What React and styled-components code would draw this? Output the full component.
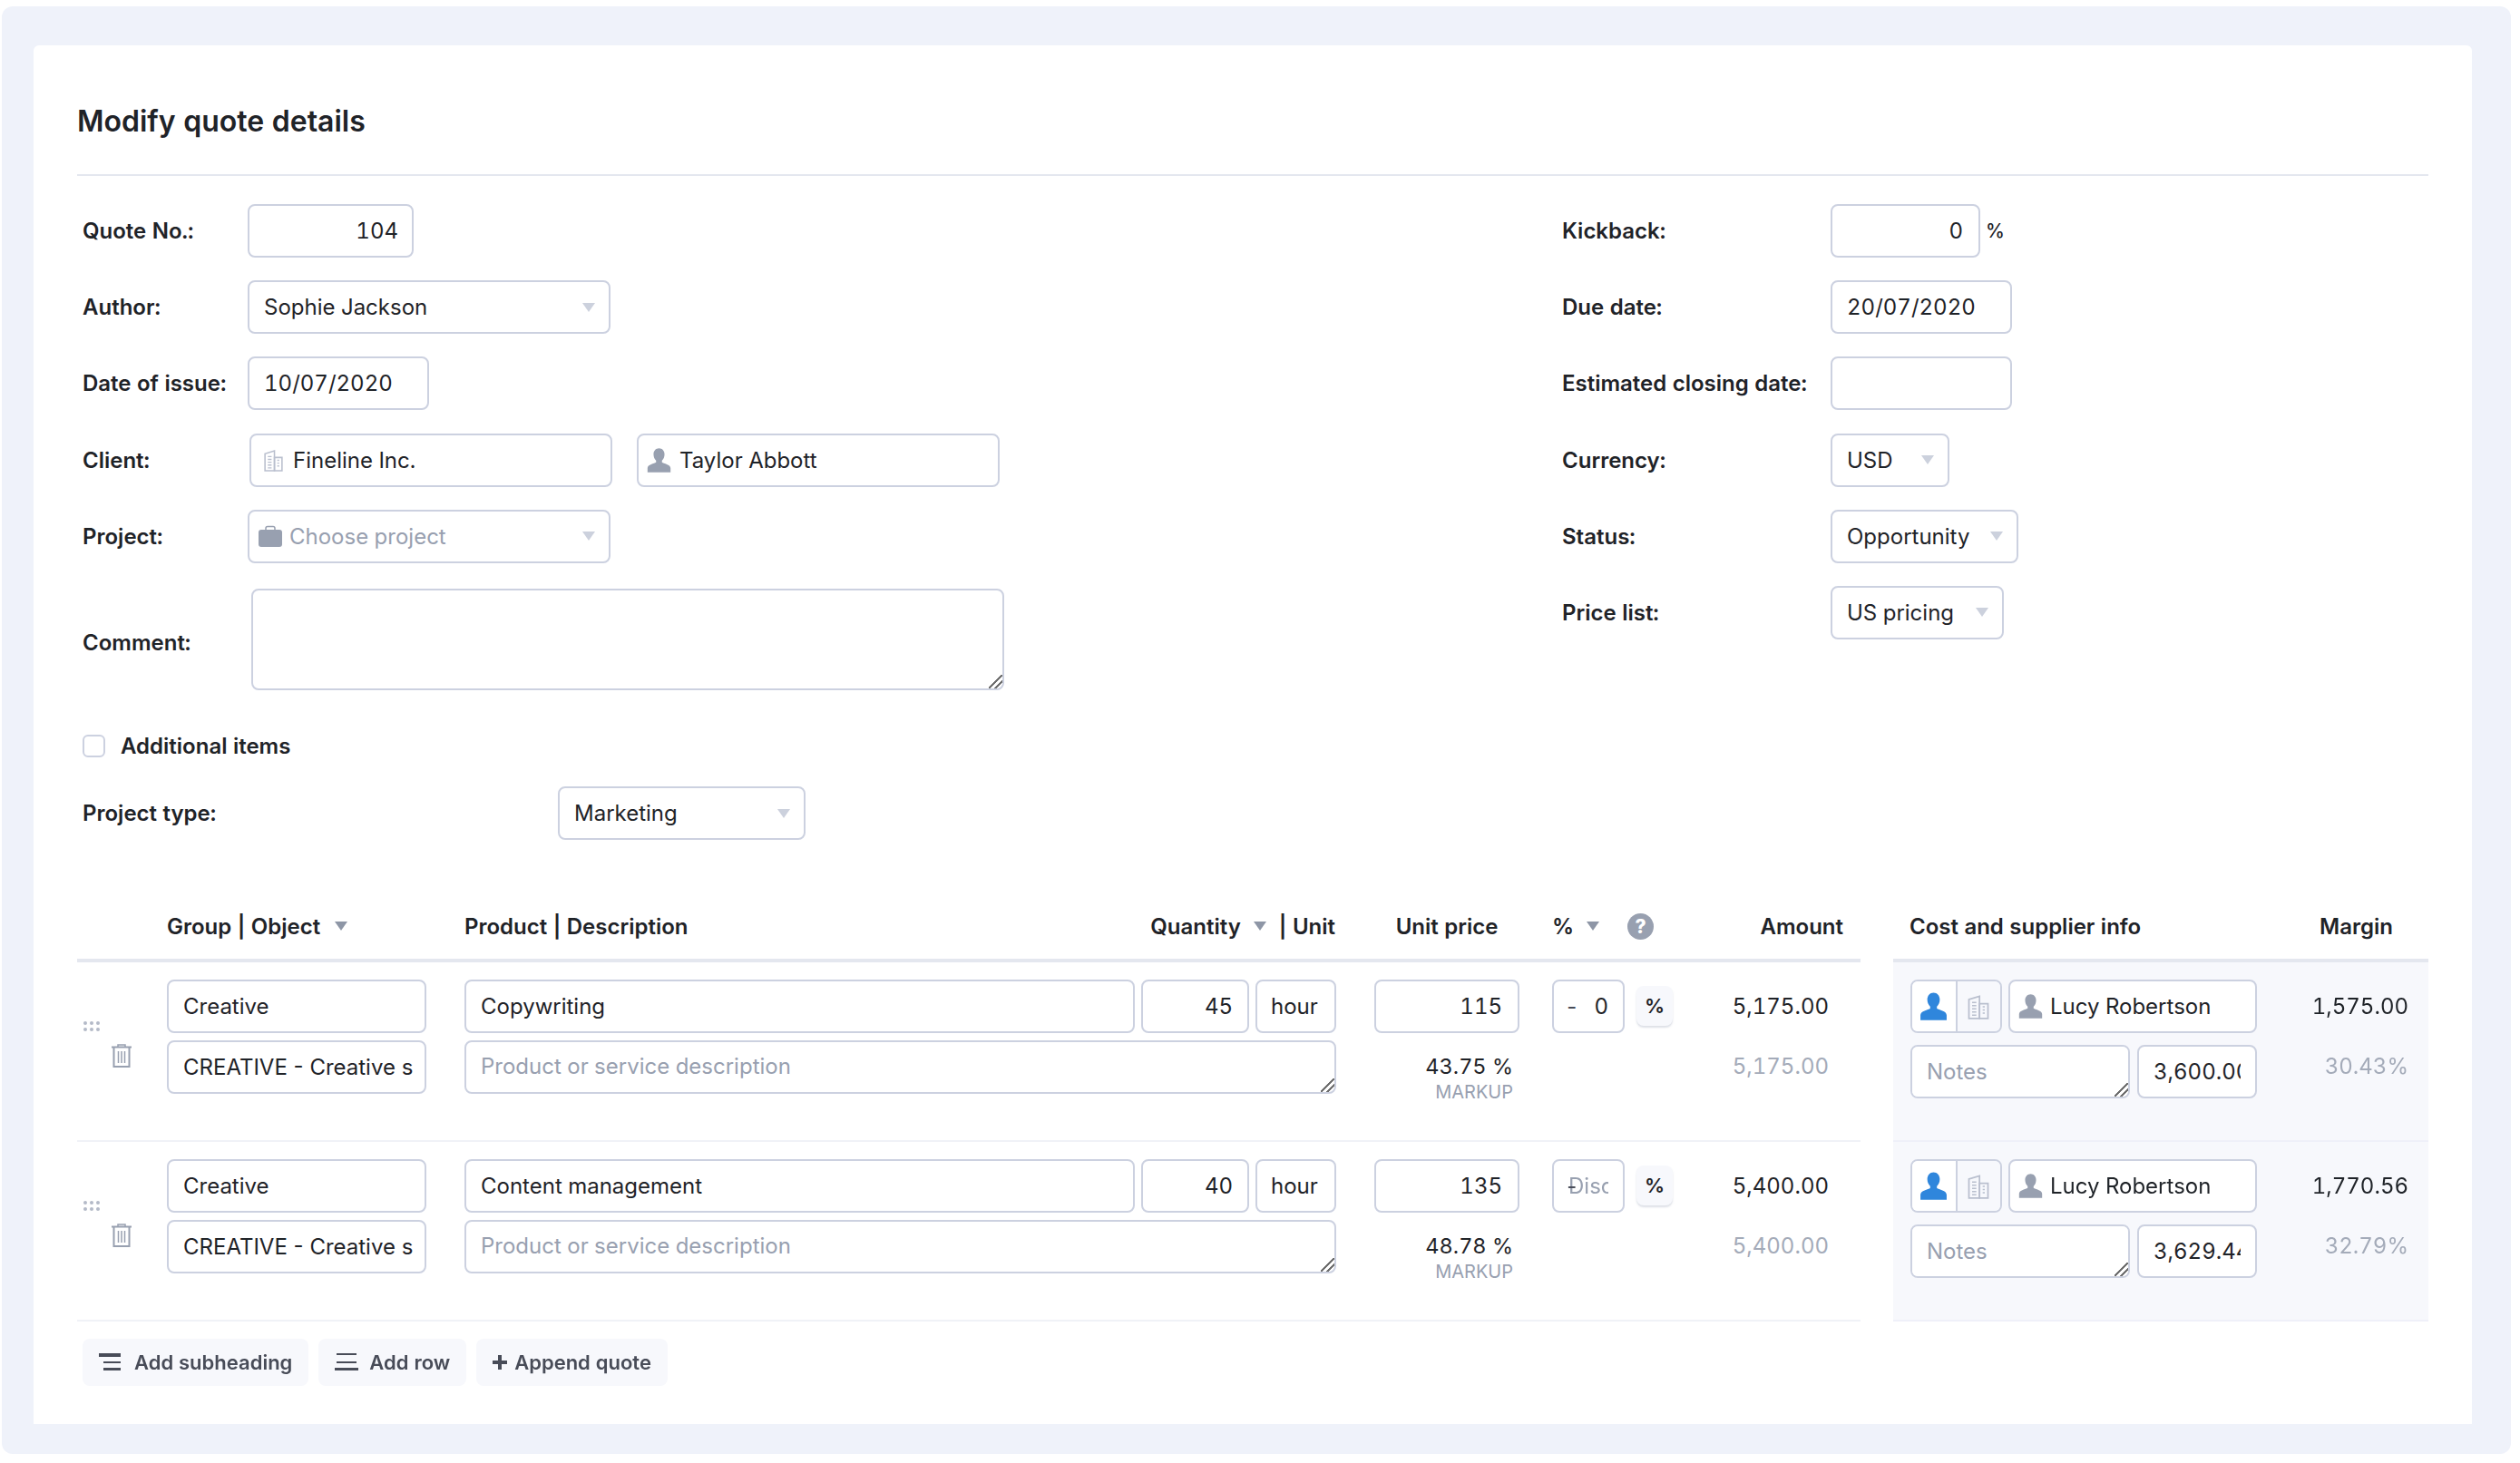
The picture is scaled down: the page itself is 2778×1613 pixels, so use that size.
import React from 'react';
import styled, { createGlobalStyle } from 'styled-components';

const GlobalStyle = createGlobalStyle`
    html, body {
        margin: 0;
        padding: 0;
        background: #fff;
    }
    body, input, textarea {
        font-family: 'Inter', 'Liberation Sans', sans-serif;
        font-size: 24px;
        font-variant-numeric: tabular-nums;
        color: #1f2328;
    }
    * {
        box-sizing: border-box;
    }
`;

const UserIcon = ({ color = '#98a0b0', size = 29 }) => (
    <svg width={size} height={size} viewBox="0 0 24 24" fill={color}>
        <path d="M12 1C9 1 7 3.4 7 6.6c0 2.5 1 4.3 2.3 5.6v1.6C7.800 14.800 1.500 15.800 1.500 19v4h21v-4c0-3.200-6.300-4.200-7.800-5.200v-1.600C16 10.900 17 9.100 17 6.600 17 3.400 15 1 12 1z" />
    </svg>
);

const BuildingIcon = ({ color = '#b9bfce', size = 25 }) => (
    <svg width={size} height={size} viewBox="0 0 24 24" fill="none" stroke={color} strokeWidth="1.500">
        <path d="M3 23V5l10-3v21z" />
        <path d="M13 9h8v14h-8z" />
        <path d="M6 8h4M6 11h4M6 14h4M6 17h4M6 20h4M16 12h2M16 15h2M16 18h2" strokeWidth="1.300" />
    </svg>
);

const BriefcaseIcon = () => (
    <svg width="26" height="24" viewBox="0 0 26 24">
        <path d="M8 6V3.500C8 2 9 1.500 10 1.500h6c1 0 2 .5 2 2V6" fill="none" stroke="#98a0b0" strokeWidth="1.500" />
        <rect x="0" y="5" width="26" height="19" rx="3" fill="#98a0b0" />
    </svg>
);

const TrashIcon = () => (
    <svg width="24" height="26" viewBox="0 0 24 26" fill="none" stroke="#98a0b0">
        <path d="M1 3.500h22" strokeWidth="2" />
        <path d="M8 3V1h8v2" strokeWidth="1.500" />
        <path d="M3.500 4v21h17V4" strokeWidth="2" />
        <path d="M8.500 8v13M12 8v13M15.500 8v13" strokeWidth="1.500" />
    </svg>
);

const DragDots = () => (
    <svg width="18" height="11" viewBox="0 0 18 11" fill="#b4bac8">
        <circle cx="2" cy="2" r="2" />
        <circle cx="9" cy="2" r="2" />
        <circle cx="16" cy="2" r="2" />
        <circle cx="2" cy="9" r="2" />
        <circle cx="9" cy="9" r="2" />
        <circle cx="16" cy="9" r="2" />
    </svg>
);

const SubheadingIcon = () => (
    <svg width="24" height="20" viewBox="0 0 24 20" fill="#484c58">
        <rect x="0" y="0" width="24" height="4" />
        <rect x="5" y="9" width="19" height="2" />
        <rect x="5" y="16" width="19" height="3" />
    </svg>
);

const RowsIcon = () => (
    <svg width="26" height="20" viewBox="0 0 26 20" fill="#484c58">
        <rect x="2" y="0" width="22" height="2" />
        <rect x="2" y="9" width="22" height="2" />
        <rect x="0" y="16" width="26" height="3" />
    </svg>
);

const PlusIcon = () => (
    <svg width="16" height="16" viewBox="0 0 16 16" fill="#484c58">
        <rect x="0" y="6" width="16" height="4" />
        <rect x="6" y="0" width="4" height="16" />
    </svg>
);

const Page = styled.div`
    width: 2766px;
    margin: 7px 0 9px 2px;
    padding: 43px 43px 33px 35px;
    background: #eff2fa;
    border-radius: 12px;
`;

const Card = styled.div`
    background: #fff;
    border-radius: 6px 6px 0 0;
    padding: 64px 48px 42px;
`;

const Title = styled.h1`
    margin: 0 0 38px;
    font-size: 32px;
    line-height: 40px;
    font-weight: 600;
    color: #1f2328;
`;

const Rule = styled.div`
    height: 2px;
    background: #e4e7ef;
`;

const Form = styled.div`
    display: flex;
    margin-top: 31px;
    padding-left: 6px;
`;

const LeftCol = styled.div`
    width: 1631px;
    display: flex;
    flex-direction: column;
`;

const RightCol = styled.div`
    display: flex;
    flex-direction: column;
`;

const FormRow = styled.div`
    display: flex;
    align-items: center;
    min-height: 59px;
    margin-top: ${(p) => p.$mt || 0}px;
    margin-bottom: 25.200px;
`;

const Label = styled.label`
    width: ${(p) => p.$w || 182}px;
    flex-shrink: 0;
    padding-top: ${(p) => p.$pt || 0}px;
    font-weight: 600;
    font-size: 24px;
`;

const Input = styled.input`
    display: block;
    width: ${(p) => (p.$w ? p.$w + 'px' : '100%')};
    height: 59px;
    flex-shrink: ${(p) => (p.$w ? 0 : 1)};
    min-width: 0;
    padding: 0 ${(p) => p.$pr || 16}px 0 ${(p) => p.$pl || 16}px;
    text-align: ${(p) => (p.$right ? 'right' : 'left')};
    background: #fff;
    border: 2px solid #ccd1e0;
    border-radius: 8px;
    outline: none;
    font-size: 24px;
    font-variant-numeric: ${(p) => (p.$plain ? 'normal' : 'tabular-nums')};
    color: #1f2328;
    &::placeholder {
        color: #98a0b0;
        opacity: 1;
    }
`;

const Area = styled.textarea`
    display: block;
    width: ${(p) => p.$w}px;
    height: ${(p) => p.$h || 59}px;
    margin-left: ${(p) => p.$ml || 0}px;
    padding: ${(p) => p.$pt || 13}px 16px;
    background: #fff;
    border: 2px solid #ccd1e0;
    border-radius: 8px;
    outline: none;
    font-size: 24px;
    line-height: 30px;
    color: #1f2328;
    &::placeholder {
        color: #98a0b0;
        opacity: 1;
    }
    &::-webkit-resizer {
        background: linear-gradient(135deg, transparent 44%, #6e6e6e 44% 54%, transparent 54% 68%, #6e6e6e 68% 77%, transparent 77%);
    }
`;

const Select = styled.div`
    width: ${(p) => p.$w}px;
    height: 59px;
    display: flex;
    align-items: center;
    justify-content: space-between;
    padding: 0 15px 0 ${(p) => p.$pl || 16}px;
    border: 2px solid #ccd1e0;
    border-radius: 8px;
    color: ${(p) => (p.$muted ? '#98a0b0' : '#1f2328')};
`;

const SelectText = styled.span`
    display: flex;
    align-items: center;
    gap: 8px;
`;

const Caret = styled.i`
    display: inline-block;
    flex-shrink: 0;
    width: 0;
    height: 0;
    border-left: 7px solid transparent;
    border-right: 7px solid transparent;
    border-top: 10px solid ${(p) => p.$color || '#ccd1dd'};
`;

const IconField = styled.div`
    width: ${(p) => p.$w}px;
    height: 59px;
    flex-shrink: 0;
    margin-left: ${(p) => p.$ml || 0}px;
    display: flex;
    align-items: center;
    gap: ${(p) => p.$gap || 8}px;
    padding-left: ${(p) => p.$pl || 8}px;
    background: #fff;
    border: 2px solid #ccd1e0;
    border-radius: 8px;
`;

const Unit = styled.span`
    margin-left: 6px;
    font-weight: 500;
    font-size: 21px;
`;

const CheckRow = styled.div`
    display: flex;
    align-items: center;
    gap: 17px;
    margin: 22px 0 0 6px;
    font-weight: 600;
    font-size: 24px;
`;

const Check = styled.input`
    appearance: none;
    width: 25px;
    height: 25px;
    margin: 0;
    background: #fff;
    border: 2px solid #ccd1e0;
    border-radius: 6px;
`;

const TypeRow = styled.div`
    display: flex;
    align-items: center;
    margin: 30px 0 0 6px;
`;

const Table = styled.div`
    display: flex;
    gap: 36px;
    margin-top: 62px;
`;

const Main = styled.div`
    width: 1966px;
`;

const Side = styled.div`
    width: 590px;
`;

const columns = '99px 328px 1003px 196px 133px 172px';

const HeadRow = styled.div`
    display: grid;
    grid-template-columns: ${columns};
    align-items: center;
    height: 73px;
    padding-bottom: 3px;
    border-bottom: 4px solid #e4e7ef;
    font-weight: 600;
    font-size: 24px;
`;

const HeadCell = styled.div`
    grid-column: ${(p) => p.$col};
    display: flex;
    align-items: center;
    justify-content: ${(p) => p.$justify || 'flex-start'};
    width: ${(p) => (p.$w ? p.$w + 'px' : 'auto')};
    margin-right: ${(p) => p.$mr || 0}px;
    gap: ${(p) => p.$gap || 0}px;
`;

const Help = styled.span`
    width: 29px;
    height: 29px;
    margin-left: 17px;
    border-radius: 50%;
    background: #98a0b0;
    color: #fff;
    font-size: 21px;
    font-weight: 800;
    line-height: 29px;
    text-align: center;
`;

const ItemRow = styled.div`
    display: grid;
    grid-template-columns: ${columns};
    height: 198px;
    padding-top: 19px;
    border-bottom: 2px solid #f0f2f7;
`;

const Handle = styled.div`
    display: flex;
    flex-direction: column;
    padding: 46px 0 0 7px;
`;

const Trash = styled.span`
    display: block;
    margin: 14px 0 0 30px;
`;

const Stack = styled.div`
    display: flex;
    flex-direction: column;
    gap: 8px;
    width: ${(p) => p.$w}px;
`;

const InlineFields = styled.div`
    display: flex;
    gap: 7px;
`;

const Markup = styled.div`
    height: 59px;
    padding: 18px 7px 0 0;
    text-align: right;
    font-weight: 400;
    font-size: 23.500px;
    line-height: 22px;
`;

const MarkupNote = styled.div`
    margin-top: 7px;
    color: #98a0b0;
    font-size: 20px;
    font-weight: 400;
    line-height: 20px;
`;

const DiscountWrap = styled.div`
    display: flex;
    align-items: flex-start;
    gap: 13px;
`;

const DiscountBox = styled.div`
    position: relative;
    width: 80px;
`;

const Sign = styled.span`
    position: absolute;
    left: 14px;
    top: 15px;
    font-size: 24px;
    color: #474b57;
`;

const PercentButton = styled.div`
    width: 40px;
    height: 44px;
    margin-top: 7px;
    background: #f7f8fc;
    border-radius: 8px;
    box-shadow: 0 2px 2px rgba(120, 130, 160, 0.25);
    font-weight: 600;
    font-size: 22px;
    line-height: 44px;
    text-align: center;
`;

const Figures = styled.div`
    display: flex;
    flex-direction: column;
    text-align: right;
    width: 100%;
    font-size: 24px;
`;

const Figure = styled.div`
    height: ${(p) => p.$h || 59}px;
    line-height: 59px;
    color: ${(p) => (p.$muted ? '#a4abb9' : '#1f2328')};
`;

const SideHead = styled.div`
    display: flex;
    align-items: center;
    justify-content: space-between;
    height: 73px;
    padding: 0 39px 3px 18px;
    border-bottom: 4px solid #e4e7ef;
    font-weight: 600;
    font-size: 24px;
`;

const SideRow = styled.div`
    display: flex;
    height: 198px;
    padding: 19px 22px 0 19px;
    background: #f7f8fc;
    border-bottom: 2px solid #eff0f9;
`;

const SideControls = styled.div`
    width: 382px;
    flex-shrink: 0;
    display: flex;
    flex-direction: column;
    gap: 13px;
`;

const SideLine = styled.div`
    display: flex;
    gap: ${(p) => p.$gap}px;
`;

const Toggle = styled.div`
    width: 101px;
    height: 59px;
    display: flex;
    border: 2px solid #ccd1e0;
    border-radius: 8px;
    overflow: hidden;
`;

const ToggleCell = styled.div`
    flex: 1;
    display: flex;
    align-items: center;
    justify-content: center;
    background: ${(p) => (p.$active ? '#fff' : '#f7f8fc')};
    & + & {
        border-left: 2px solid #ccd1e0;
    }
`;

const SideFigures = styled.div`
    flex: 1;
`;

const Actions = styled.div`
    display: flex;
    gap: 11px;
    margin: 19px 0 0 6px;
`;

const ActionButton = styled.div`
    height: 52px;
    display: flex;
    align-items: center;
    gap: ${(p) => p.$gap || 15}px;
    padding: 0 18px;
    background: #f7f8fc;
    border-radius: 8px;
    color: #484c58;
    font-weight: 600;
    font-size: 22px;
`;

const rows = [
    { product: 'Copywriting', qty: '45', price: '115', disc: '0', markup: '43.75 %', amount: '5,175.00', cost: '3,600.00', margin: '1,575.00', pct: '30.43%' },
    { product: 'Content management', qty: '40', price: '135', disc: '', markup: '48.78 %', amount: '5,400.00', cost: '3,629.44', margin: '1,770.56', pct: '32.79%' },
];

const App = () => {
    return (
        <Page>
            <GlobalStyle />
            <Card>
                <Title>Modify quote details</Title>
                <Rule />
                <Form>
                    <LeftCol>
                        <FormRow>
                            <Label>Quote No.:</Label>
                            <Input $w={183} $right $pr={15} readOnly value="104" />
                        </FormRow>
                        <FormRow>
                            <Label>Author:</Label>
                            <Select $w={400}>
                                Sophie Jackson
                                <Caret />
                            </Select>
                        </FormRow>
                        <FormRow>
                            <Label>Date of issue:</Label>
                            <Input $w={200} readOnly value="10/07/2020" />
                        </FormRow>
                        <FormRow>
                            <Label>Client:</Label>
                            <IconField $w={400} $ml={2} $pl={12} $gap={9}>
                                <BuildingIcon />
                                Fineline Inc.
                            </IconField>
                            <IconField $w={400} $ml={27}>
                                <UserIcon />
                                Taylor Abbott
                            </IconField>
                        </FormRow>
                        <FormRow>
                            <Label>Project:</Label>
                            <Select $w={400} $muted $pl={10}>
                                <SelectText>
                                    <BriefcaseIcon />
                                    Choose project
                                </SelectText>
                                <Caret />
                            </Select>
                        </FormRow>
                        <FormRow $mt={3}>
                            <Label $pt={8}>Comment:</Label>
                            <Area $w={830} $h={112} $ml={4} />
                        </FormRow>
                    </LeftCol>
                    <RightCol>
                        <FormRow>
                            <Label $w={296}>Kickback:</Label>
                            <Input $w={165} $right $pr={17} readOnly value="0" />
                            <Unit>%</Unit>
                        </FormRow>
                        <FormRow>
                            <Label $w={296}>Due date:</Label>
                            <Input $w={200} readOnly value="20/07/2020" />
                        </FormRow>
                        <FormRow>
                            <Label $w={296}>Estimated closing date:</Label>
                            <Input $w={200} readOnly />
                        </FormRow>
                        <FormRow>
                            <Label $w={296}>Currency:</Label>
                            <Select $w={131}>
                                USD
                                <Caret />
                            </Select>
                        </FormRow>
                        <FormRow>
                            <Label $w={296}>Status:</Label>
                            <Select $w={207}>
                                Opportunity
                                <Caret />
                            </Select>
                        </FormRow>
                        <FormRow>
                            <Label $w={296}>Price list:</Label>
                            <Select $w={191}>
                                US pricing
                                <Caret />
                            </Select>
                        </FormRow>
                    </RightCol>
                </Form>
                <CheckRow>
                    <Check type="checkbox" />
                    Additional items
                </CheckRow>
                <TypeRow>
                    <Label $w={524}>Project type:</Label>
                    <Select $w={273}>
                        Marketing
                        <Caret />
                    </Select>
                </TypeRow>
                <Table>
                    <Main>
                        <HeadRow>
                            <HeadCell $col={2} $gap={16}>
                                Group | Object
                                <Caret $color="#8e96a6" />
                            </HeadCell>
                            <HeadCell $col={3} $justify="space-between" $w={960}>
                                <span>Product | Description</span>
                                <HeadCell $gap={14}>
                                    Quantity
                                    <Caret $color="#8e96a6" />
                                    | Unit
                                </HeadCell>
                            </HeadCell>
                            <HeadCell $col={4} $justify="center" $w={160}>Unit price</HeadCell>
                            <HeadCell $col={5} $gap={14}>
                                %
                                <Caret $color="#8e96a6" />
                                <Help>?</Help>
                            </HeadCell>
                            <HeadCell $col={6} $justify="flex-end" $mr={-16}>Amount</HeadCell>
                        </HeadRow>
                        {rows.map((row) => (
                            <ItemRow key={row.product}>
                                <Handle>
                                    <DragDots />
                                    <Trash>
                                        <TrashIcon />
                                    </Trash>
                                </Handle>
                                <Stack $w={286}>
                                    <Input readOnly value="Creative" />
                                    <Input $plain $pr={13} readOnly value="CREATIVE - Creative services" />
                                </Stack>
                                <Stack $w={961}>
                                    <InlineFields>
                                        <Input readOnly value={row.product} />
                                        <Input $w={119} $right readOnly value={row.qty} />
                                        <Input $w={89} $pl={15} readOnly value="hour" />
                                    </InlineFields>
                                    <Area $w={961} $pt={12} placeholder="Product or service description" />
                                </Stack>
                                <Stack $w={160}>
                                    <Input $right $pr={17} readOnly value={row.price} />
                                    <Markup>
                                        {row.markup}
                                        <MarkupNote>MARKUP</MarkupNote>
                                    </Markup>
                                </Stack>
                                <DiscountWrap>
                                    <DiscountBox>
                                        <Sign>-</Sign>
                                        <Input $pl={16} $pr={16} $right readOnly value={row.disc} placeholder="Discount" />
                                    </DiscountBox>
                                    <PercentButton>%</PercentButton>
                                </DiscountWrap>
                                <Figures>
                                    <Figure $h={66}>{row.amount}</Figure>
                                    <Figure $muted>{row.amount}</Figure>
                                </Figures>
                            </ItemRow>
                        ))}
                    </Main>
                    <Side>
                        <SideHead>
                            <span>Cost and supplier info</span>
                            <span>Margin</span>
                        </SideHead>
                        {rows.map((row) => (
                            <SideRow key={row.product}>
                                <SideControls>
                                    <SideLine $gap={7}>
                                        <Toggle>
                                            <ToggleCell $active>
                                                <UserIcon color="#2f86dc" size={33} />
                                            </ToggleCell>
                                            <ToggleCell>
                                                <BuildingIcon size={28} />
                                            </ToggleCell>
                                        </Toggle>
                                        <IconField $w={274} $gap={7}>
                                            <UserIcon />
                                            Lucy Robertson
                                        </IconField>
                                    </SideLine>
                                    <SideLine $gap={8}>
                                        <Area $w={242} placeholder="Notes" />
                                        <Input $w={132} readOnly value={row.cost} />
                                    </SideLine>
                                </SideControls>
                                <SideFigures>
                                    <Figures>
                                        <Figure $h={66}>{row.margin}</Figure>
                                        <Figure $muted>{row.pct}</Figure>
                                    </Figures>
                                </SideFigures>
                            </SideRow>
                        ))}
                    </Side>
                </Table>
                <Actions>
                    <ActionButton>
                        <SubheadingIcon />
                        Add subheading
                    </ActionButton>
                    <ActionButton $gap={12}>
                        <RowsIcon />
                        Add row
                    </ActionButton>
                    <ActionButton $gap={8}>
                        <PlusIcon />
                        Append quote
                    </ActionButton>
                </Actions>
            </Card>
        </Page>
    );
};

export default App;
